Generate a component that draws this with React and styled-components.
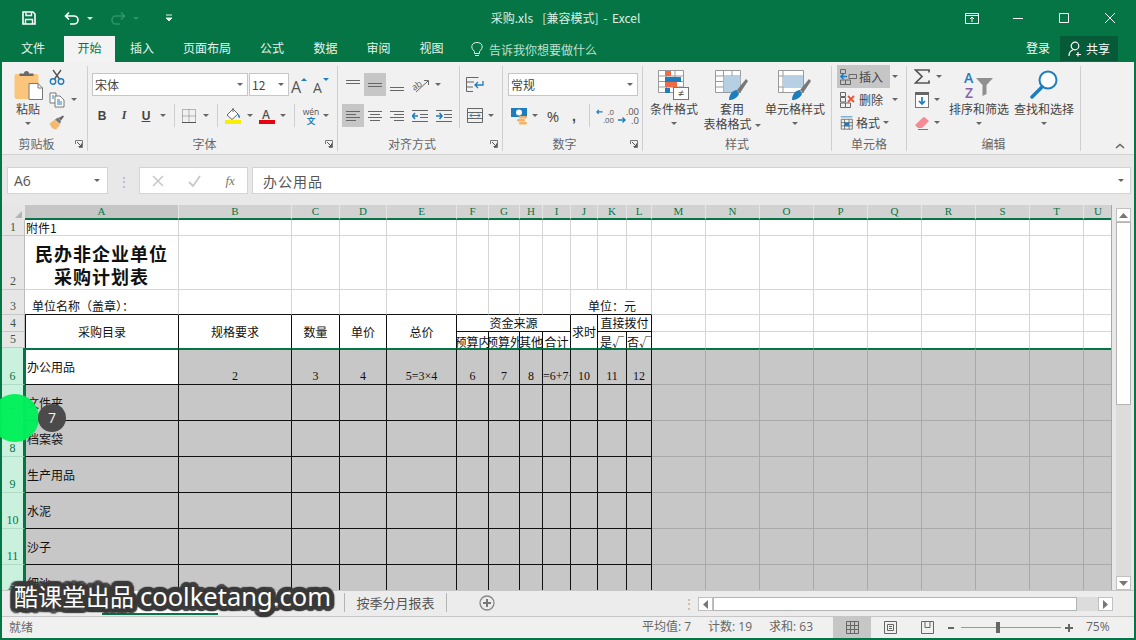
import React from 'react';
import styled, { createGlobalStyle } from 'styled-components';

const GREEN = '#067545';
const UI = '"Noto Sans CJK SC", "Noto Sans", sans-serif';
const SHEET = '"Noto Sans CJK SC", "Liberation Serif", serif';
const LATIN = '"Liberation Serif", serif';

const GlobalStyle = createGlobalStyle`
  html, body { margin: 0; padding: 0; width: 1136px; height: 640px; overflow: hidden; }
  * { box-sizing: border-box; }
  body { font-family: ${UI}; font-size: 12px; }
`;

const Window = styled.div`
  position: relative;
  width: 1136px;
  height: 640px;
  overflow: hidden;
  display: flex;
  flex-direction: column;
  background: ${GREEN};
  padding: 0 2px 2px;
`;

/* title bar */
const TitleBar = styled.div`
  height: 36px;
  display: grid;
  grid-template-columns: 1fr auto 1fr;
  align-items: center;
  color: #d9efe3;
`;
const Qat = styled.div`
  display: flex;
  align-items: center;
  padding-left: 17px;
`;
const Slot = styled.div`
  width: ${p => p.$w}px;
  height: ${p => p.$h || 23}px;
  flex: none;
  display: flex;
  align-items: center;
  justify-content: center;
`;
const WindowTitle = styled.div`
  font-size: 12px;
  line-height: 16px;
  white-space: pre;
  word-spacing: 2px;
  margin-right: 5px;
`;
const WinControls = styled.div`
  display: flex;
  align-items: center;
  justify-content: flex-end;
  padding-right: 1px;
`;
const WinBtn = styled.div`
  width: 46px;
  height: 20px;
  display: flex;
  align-items: center;
  justify-content: center;
`;

/* tabs */
const TabBar = styled.div`
  height: 26px;
  display: flex;
  align-items: stretch;
  color: #e6f4ec;
  line-height: 23px;
`;
const Tab = styled.div`
  width: ${p => p.$w}px;
  text-align: center;
  background: ${p => (p.$on ? '#f3f3f3' : 'transparent')};
  color: ${p => (p.$on ? GREEN : 'inherit')};
`;
const TellMe = styled.div`
  display: flex;
  align-items: center;
  gap: 6px;
  margin-left: 13px;
  color: #bfe0cf;
  flex: 1;
`;
const SignIn = styled.div`
  margin-right: 10px;
  color: #f4fbf7;
`;
const ShareBtn = styled.div`
  width: 58px;
  margin-right: 16px;
  height: 25px;
  background: #075a38;
  display: flex;
  align-items: center;
  justify-content: center;
  gap: 3px;
  color: #f4fbf7;
`;

/* ribbon */
const Ribbon = styled.div`
  height: 93px;
  display: flex;
  padding: 4px 0 3px;
  background: #f1f1f1;
  border-bottom: 1px solid #d2d2d2;
  color: #444;
`;
const Group = styled.div`
  width: ${p => p.$w}px;
  flex: none;
  display: flex;
  flex-direction: column;
  border-right: 1px solid #cfcfcf;
`;
const GroupBody = styled.div`
  height: 72px;
  display: flex;
  flex-direction: ${p => p.$dir || 'row'};
  padding-top: ${p => p.$top || 0}px;
  padding-left: ${p => p.$left || 0}px;
  gap: ${p => p.$gap || 0}px;
`;
const GroupFoot = styled.div`
  height: 14px;
  display: flex;
  align-items: center;
  line-height: 14px;
  color: #666;
`;
const GroupName = styled.div`
  flex: 1;
  text-align: center;
`;
const Launcher = styled.div`
  width: 16px;
  display: flex;
  align-items: center;
  justify-content: center;
`;
const ToolRow = styled.div`
  display: flex;
  align-items: center;
  height: 23px;
  margin-top: ${p => p.$mt || 0}px;
`;
const ToolCol = styled.div`
  display: flex;
  flex-direction: column;
  gap: ${p => p.$gap || 0}px;
  width: ${p => (p.$w ? `${p.$w}px` : 'auto')};
  border-right: ${p => (p.$line ? '1px solid #cfcfcf' : 'none')};
  height: ${p => (p.$line ? '62px' : 'auto')};
  padding-left: ${p => p.$left || 0}px;
  margin-top: ${p => p.$mt || 0}px;
`;
const Tool = styled.div`
  width: ${p => p.$w}px;
  height: 23px;
  flex: none;
  display: flex;
  align-items: center;
  justify-content: center;
  background: ${p => (p.$on ? '#c6c6c6' : 'transparent')};
`;
const Caret = styled.div`
  width: ${p => p.$w || 10}px;
  flex: none;
  display: flex;
  justify-content: center;
  &::after {
    content: '';
    border-left: 3px solid transparent;
    border-right: 3px solid transparent;
    border-top: 3px solid ${p => p.$color || '#666'};
  }
`;
const ToolSep = styled.div`
  width: ${p => p.$w}px;
  flex: none;
  height: 23px;
  display: flex;
  justify-content: center;
  &::after {
    content: '';
    width: 1px;
    background: #cfcfcf;
  }
`;
const ComboBox = styled.div`
  width: ${p => p.$w}px;
  height: 23px;
  flex: none;
  margin-left: ${p => p.$ml || 0}px;
  background: #fff;
  border: 1px solid #c6c6c6;
  display: flex;
  align-items: center;
  justify-content: space-between;
  padding: 0 3px 0 2px;
  color: #444;
`;
const BigButton = styled.div`
  width: ${p => p.$w}px;
  flex: none;
  display: flex;
  flex-direction: column;
  align-items: center;
  padding-top: 4px;
  white-space: nowrap;
  line-height: 15px;
`;
const BigIcon = styled.div`
  height: 30px;
  margin-bottom: 1px;
`;
const BigCaret = styled.div`
  height: 15px;
  display: flex;
  align-items: center;
`;
const InlineCaret = styled.span`
  display: inline-block;
  margin-left: 3px;
  vertical-align: middle;
  border-left: 3px solid transparent;
  border-right: 3px solid transparent;
  border-top: 3px solid #666;
`;
const CellBtn = styled.div`
  width: 53px;
  height: 23px;
  flex: none;
  display: flex;
  align-items: center;
  gap: 2px;
  padding-left: 3px;
  white-space: nowrap;
  background: ${p => (p.$on ? '#c6c6c6' : 'transparent')};
`;
const Collapse = styled.div`
  flex: 1;
  display: flex;
  align-items: flex-end;
  justify-content: flex-end;
  padding: 0 9px 2px 0;
`;
const Glyph = styled.span`
  font: ${p => p.$font};
  text-decoration: ${p => (p.$under ? 'underline' : 'none')};
  color: ${p => p.$color || '#444'};
`;

/* formula bar */
const FormulaBar = styled.div`
  height: 50px;
  display: flex;
  padding: 12px 3px 0 5px;
  background: #e8e8e8;
`;
const NameBox = styled.div`
  width: 101px;
  height: 27px;
  background: #fff;
  border: 1px solid #d4d4d4;
  display: flex;
  align-items: center;
  justify-content: space-between;
  padding: 0 6px;
  font: 14px "Open Sans", sans-serif;
  color: #555;
`;
const FxDots = styled.div`
  width: 31px;
  height: 27px;
  display: flex;
  align-items: center;
  justify-content: center;
  color: #aaa;
`;
const FxButtons = styled.div`
  width: 109px;
  height: 27px;
  margin-right: 4px;
  background: #fff;
  border: 1px solid #d4d4d4;
  display: flex;
  align-items: center;
  justify-content: space-around;
`;
const FxInput = styled.div`
  flex: 1;
  height: 27px;
  background: #fff;
  border: 1px solid #d4d4d4;
  display: flex;
  align-items: center;
  justify-content: space-between;
  padding: 0 5px 0 10px;
  font-size: 14px;
  letter-spacing: 1px;
  color: #555;
`;

/* sheet */
const SheetArea = styled.div`
  height: 385px;
  display: flex;
  background: #e8e8e8;
`;
const COLS = [154, 113, 48, 47, 70, 32, 31, 23, 28, 27, 29, 25, 54, 54, 54, 54, 54, 54, 54, 54, 29];
const ROWS = [16, 54, 25, 17, 16, 37, 36, 36, 36, 36, 36, 36];
const SheetGrid = styled.div`
  width: 1110px;
  height: 385px;
  display: grid;
  grid-template-columns: 23px ${COLS.map(c => `${c}px`).join(' ')};
  grid-template-rows: 15px ${ROWS.map(r => `${r}px`).join(' ')};
  overflow: hidden;
  border-right: 1px solid #a8a8a8;
  background: #fff;
`;
const Corner = styled.div`
  background: #e6e6e6;
  display: flex;
  align-items: flex-end;
  justify-content: flex-end;
  padding: 0 3px 2px 0;
`;
const ColHead = styled.div`
  background: ${p => (p.$on ? '#c6c6c6' : '#d2d2d2')};
  border-right: 1px solid #e4e4e4;
  border-bottom: 2px solid ${GREEN};
  color: ${GREEN};
  font: 11px/13px ${LATIN};
  text-align: center;
`;
const RowHead = styled.div`
  background: ${p => (p.$on ? '#c9f1de' : '#e6e6e6')};
  border-bottom: 1px solid ${p => (p.$on ? '#aedcc5' : '#c8c8c8')};
  border-right: ${p => (p.$on ? `2px solid ${GREEN}` : '1px solid #bdbdbd')};
  color: ${p => (p.$on ? GREEN : '#3c5a4c')};
  font: 12px/13px ${LATIN};
  display: flex;
  align-items: flex-end;
  justify-content: center;
  padding-bottom: 1px;
`;
const Cell = styled.div`
  grid-column: span ${p => p.$cs || 1};
  grid-row: span ${p => p.$rs || 1};
  min-width: 0;
  overflow: hidden;
  display: flex;
  white-space: nowrap;
  color: #111;
  font: 12px/14px ${SHEET};
  background: ${p => (p.$shade ? '#c7c7c7' : '#fff')};
  border-right: 1px solid ${p => p.$right};
  border-bottom: ${p => (p.$bottom ? `1px solid ${p.$bottom}` : 'none')};
  border-left: ${p => (p.$leftLine ? `1px solid ${p.$leftLine}` : 'none')};
  border-top: ${p => (p.$freeze ? `2px solid ${GREEN}` : 'none')};
  justify-content: ${p => (p.$h === 'left' ? 'flex-start' : 'center')};
  align-items: ${p => ({ top: 'flex-start', bottom: 'flex-end' }[p.$v] || 'center')};
  padding-left: ${p => p.$pad || 0}px;
  padding-top: ${p => (p.$v === 'top' ? 3 : 0)}px;
  padding-bottom: ${p => (p.$v === 'bottom' ? 1 : 0)}px;
`;
const Digits = styled.span`
  font: 12px/14px ${LATIN};
`;
const SheetTitle = styled.div`
  font: 700 18px/23px ${SHEET};
  letter-spacing: 1px;
  text-align: center;
  white-space: pre-line;
  padding-top: 4px;
`;
const VScroll = styled.div`
  width: 15px;
  margin-left: 4px;
  padding-top: 3px;
  display: flex;
  flex-direction: column;
  background: linear-gradient(#e8e8e8 3px, #dcdcdc 3px);
`;
const ScrollBtn = styled.div`
  width: ${p => p.$w || 15}px;
  height: ${p => p.$h || 14}px;
  flex: none;
  background: #fff;
  border: 1px solid #c0c0c0;
  display: flex;
  align-items: center;
  justify-content: center;
`;
const VThumb = styled.div`
  height: 183px;
  background: #fff;
  border: 1px solid #b4b4b4;
`;
const VTrack = styled.div`
  flex: 1;
`;

/* sheet tabs + status */
const SheetTabs = styled.div`
  height: 27px;
  display: flex;
  background: #ececec;
  border-top: 1px solid #c6c6c6;
  border-bottom: 1px solid #c6c6c6;
  color: #555;
`;
const TabStrip = styled.div`
  width: 678px;
  flex: none;
  display: flex;
  align-items: flex-start;
  padding-left: 100px;
`;
const SheetTab = styled.div`
  width: ${p => p.$w}px;
  height: ${p => (p.$on ? 24 : 19)}px;
  margin-top: ${p => (p.$on ? 0 : 2)}px;
  flex: none;
  text-align: center;
  font-size: 13px;
  line-height: 19px;
  background: ${p => (p.$on ? '#fff' : 'transparent')};
  border-bottom: ${p => (p.$on ? `2px solid ${GREEN}` : 'none')};
  border-right: ${p => (p.$line ? '1px solid #b4b4b4' : 'none')};
  color: ${p => (p.$on ? GREEN : '#555')};
`;
const AddSheet = styled.div`
  margin-left: 32px;
  height: 24px;
  display: flex;
  align-items: center;
`;
const HScroll = styled.div`
  flex: 1;
  display: flex;
  align-items: flex-start;
  padding-top: 6px;
`;
const HDots = styled.div`
  width: 18px;
  height: 14px;
  color: #aaa;
  line-height: 12px;
  text-align: center;
`;
const HThumb = styled.div`
  width: 364px;
  height: 14px;
  background: #fff;
  border: 1px solid #b4b4b4;
`;
const HTrack = styled.div`
  width: 21px;
  height: 14px;
  background: #dcdcdc;
`;
const StatusBar = styled.div`
  height: 21px;
  display: flex;
  align-items: stretch;
  background: #f0f0f0;
  color: #666;
  line-height: 20px;
  padding-left: 7px;
`;
const Ready = styled.div`
  width: 633px;
  flex: none;
`;
const StatItem = styled.div`
  flex: none;
  width: ${p => p.$w}px;
  font-family: "Open Sans", ${UI};
`;
const ViewBtn = styled.div`
  width: ${p => p.$w}px;
  flex: none;
  display: flex;
  align-items: center;
  justify-content: center;
  background: ${p => (p.$on ? '#c6c6c6' : 'transparent')};
`;
const ZoomSlider = styled.div`
  width: 100px;
  margin: 0 4px;
  flex: none;
  display: flex;
  align-items: center;
  justify-content: center;
  background: linear-gradient(#999, #999) center / 100% 1px no-repeat;
`;
const ZoomThumb = styled.div`
  width: 4px;
  height: 11px;
  background: #666;
  margin-right: 26px;
`;
const ZoomValue = styled.div`
  margin-left: 13px;
  font-family: "Open Sans", sans-serif;
`;

/* overlays from the screen recording */
const Halo = styled.div`
  position: absolute;
  left: -9px;
  top: 394px;
  width: 48px;
  height: 48px;
  border-radius: 50%;
  background: rgba(0, 240, 90, 0.97);
`;
const KeyBadge = styled.div`
  position: absolute;
  left: 38px;
  top: 404px;
  width: 28px;
  height: 28px;
  border-radius: 50%;
  background: #4b4b4b;
  color: #f2f2f2;
  font: 14px/28px "Open Sans", sans-serif;
  text-align: center;
`;
const ringShadow = Array.from({ length: 20 }, (_, i) => {
  const a = (i / 20) * Math.PI * 2;
  return `${(Math.cos(a) * 5).toFixed(1)}px ${(Math.sin(a) * 5).toFixed(1)}px 1px #3a3a3a`;
}).join(', ');
const Watermark = styled.div`
  position: absolute;
  left: 14px;
  top: 579px;
  display: flex;
  align-items: center;
  gap: 6px;
  color: #fff;
  line-height: 34px;
  white-space: nowrap;
  text-shadow: ${ringShadow};
`;
const MarkCn = styled.span`
  font: 24px/34px ${UI};
`;
const MarkEn = styled.span`
  font: 25.5px/34px "Noto Sans", sans-serif;
`;

/* icons */
const Svg = ({ w, h, children }) => (
  <svg width={w} height={h} viewBox={`0 0 ${w} ${h}`} fill="none">{children}</svg>
);
const Lines = ({ rows, color = '#666', w = 14, h = 14 }) => (
  <Svg w={w} h={h}>
    {rows.map(([a, b, y], i) => <path key={i} d={`M${a} ${y + 0.5}H${b}`} stroke={color} />)}
  </Svg>
);
const LauncherIcon = () => (
  <Svg w={8} h={8}>
    <path d="M0.5 4V0.5H7.5V7.5H4" stroke="#777" />
    <path d="M2 2L6.5 6.5M6.5 3.5V6.5H3.5" stroke="#555" />
  </Svg>
);
const PasteIcon = () => (
  <Svg w={30} h={30}>
    <g transform="translate(1.5 0)">
      <rect x="0" y="4" width="24" height="25" rx="2" fill="#fbc67c" />
      <path d="M5 6V3.5H9.5A2.5 2.5 0 0 1 14.5 3.5H19V6Z" fill="#6a6a6a" />
      <path d="M14.5 13.5H23.5L28 18V29.5H14.5Z" fill="#fff" stroke="#777" />
      <path d="M23.5 13.5V18H28" stroke="#777" />
    </g>
  </Svg>
);
const ScissorsIcon = () => (
  <Svg w={16} h={16}>
    <path d="M4 1L10.5 10M12 1L5.5 10" stroke="#555" strokeWidth="1.4" />
    <circle cx="4" cy="12.5" r="2.7" stroke="#1e7dbd" strokeWidth="1.4" />
    <circle cx="12" cy="12.5" r="2.7" stroke="#1e7dbd" strokeWidth="1.4" />
  </Svg>
);
const CopyIcon = () => (
  <Svg w={16} h={16}>
    <path d="M1 1H7V11H1Z" fill="#fff" stroke="#777" />
    <path d="M6 4H11L15 8V15H6Z" fill="#fff" stroke="#777" />
    <path d="M8 8H11M8 10H13M8 12H13M3 4H5M3 6H5" stroke="#1e7dbd" />
  </Svg>
);
const BrushIcon = () => (
  <Svg w={16} h={15}>
    <path d="M0.5 8.5L6 4.5L11 10L7 14.5C4 14.5 1.5 11.5 0.5 8.5Z" fill="#f6b96c" />
    <path d="M6 4.5L9 2.5L12 6L11 9Z" fill="#777" />
    <path d="M9.5 3L14 0.5L15 1.5L12 5.5Z" fill="#666" />
  </Svg>
);
const GrowIcon = ({ big }) => (
  <Svg w={20} h={20}>
    <text x="1" y="18" fontFamily="Open Sans, sans-serif" fontSize={big ? 16 : 14} fill="#555">A</text>
    <path d={big ? 'M11 6L14 3L17 6Z' : 'M11 3L17 3L14 6Z'} fill="#1e7dbd" />
  </Svg>
);
const BorderIcon = () => (
  <Svg w={14} h={14}>
    <path d="M0.5 0.5H13.5V13.5H0.5ZM7 0.5V13.5M0.5 7H13.5" stroke="#777" strokeDasharray="1 1" />
    <path d="M0 13.5H14" stroke="#555" />
  </Svg>
);
const FillIcon = () => (
  <Svg w={18} h={17}>
    <path d="M3 8L9 2L14 7L8 12.5Z" fill="#fff" stroke="#666" />
    <path d="M9 1V5" stroke="#666" />
    <path d="M14 7C16 8.5 16.5 10 15.5 11C14 10.5 14 9 14 7Z" fill="#1e7dbd" />
    <rect x="1" y="13" width="16" height="4" fill="#f8f000" />
  </Svg>
);
const FontColorIcon = () => (
  <Svg w={16} h={16}>
    <text x="3" y="11" fontFamily="Open Sans, sans-serif" fontWeight="600" fontSize="12" fill="#555">A</text>
    <rect x="0" y="12" width="16" height="4" fill="#e8000f" />
  </Svg>
);
const WenIcon = () => (
  <Svg w={18} h={18}>
    <text x="9" y="8" textAnchor="middle" fontFamily="Open Sans, sans-serif" fontSize="8.5" fill="#555">wén</text>
    <text x="9" y="17" textAnchor="middle" fontFamily="Noto Sans CJK SC, sans-serif" fontWeight="700" fontSize="8.5" fill="#1e7dbd">文</text>
  </Svg>
);
const OrientIcon = () => (
  <Svg w={18} h={16}>
    <text x="0" y="11" transform="rotate(-35 6 9)" fontFamily="Open Sans, sans-serif" fontSize="9" fill="#555">ab</text>
    <path d="M4 15L16 4M12 3.5H16.5V8" stroke="#666" />
  </Svg>
);
const IndentIcon = ({ flip }) => (
  <Svg w={16} h={12}>
    <path d="M0 0.5H16M8 4.5H16M8 7.5H16M0 11.5H16" stroke="#666" />
    <path d={flip ? 'M6 6H0M3 3L0.5 6L3 9' : 'M0 6H6M3.5 3L6 6L3.5 9'} stroke="#1e7dbd" strokeWidth="1.6" />
  </Svg>
);
const WrapIcon = () => (
  <Svg w={18} h={16}>
    <path d="M0.5 0.5H12.5M0.5 5H8M0.5 10H7M0.5 14.5H7M0.5 0.5V14.5" stroke="#666" />
    <path d="M17 4V8H9M12 5L9 8L12 11" stroke="#1e7dbd" strokeWidth="1.3" />
  </Svg>
);
const MergeIcon = () => (
  <Svg w={16} h={15}>
    <path d="M0.5 0.5H15.5V14.5H0.5ZM0.5 4.5H15.5M0.5 10.5H15.5" stroke="#666" />
    <path d="M3 7.5H13M5 5.5L3 7.5L5 9.5M11 5.5L13 7.5L11 9.5" stroke="#1e7dbd" />
  </Svg>
);
const CurrencyIcon = () => (
  <Svg w={18} h={18}>
    <rect x="0" y="1" width="16" height="9" fill="#1e7dbd" />
    <circle cx="8" cy="5.5" r="3" fill="#fff" />
    <rect x="8" y="9" width="8" height="2.5" rx="1" fill="#f4b266" />
    <rect x="6" y="12" width="8" height="2.5" rx="1" fill="#f4b266" />
    <rect x="8" y="15" width="8" height="2.5" rx="1" fill="#f4b266" />
  </Svg>
);
const DecimalIcon = ({ dec }) => (
  <Svg w={22} h={18}>
    <text x="22" y="8" textAnchor="end" fontFamily="Open Sans, sans-serif" fontSize="9.5" fill="#555">{dec ? '.00' : '.0'}</text>
    <text x="22" y="17" textAnchor="end" fontFamily="Open Sans, sans-serif" fontSize="9.5" fill="#555">{dec ? '.0' : '.00'}</text>
    <path d={dec ? 'M1 13H8M5.5 10.5L8 13L5.5 15.5' : 'M1 4H8M3.5 1.5L1 4L3.5 6.5'} stroke="#1e7dbd" strokeWidth="1.4" />
  </Svg>
);
const CondIcon = () => (
  <Svg w={32} h={30}>
    <path d="M0.5 0.5H25.5V22.5H0.5ZM0.5 6H25.5M0.5 11.5H25.5M0.5 17H25.5M8.5 0.5V22.5M17 0.5V22.5" stroke="#999" fill="#fff" />
    <rect x="7" y="1" width="6" height="5" fill="#ef6a45" />
    <rect x="7" y="7" width="16" height="5" fill="#1e7dbd" />
    <rect x="7" y="12" width="12" height="5" fill="#ef6a45" />
    <rect x="7" y="18" width="5" height="5" fill="#1e7dbd" />
    <rect x="15.5" y="17.5" width="15" height="12" fill="#fff" stroke="#777" />
    <text x="23" y="27" textAnchor="middle" fontFamily="Open Sans, sans-serif" fontSize="11" fill="#444">≠</text>
  </Svg>
);
const BrushOver = () => (
  <>
    <path d="M14 30C14 24 18 20 22 20L24 24C22 28 18 30 14 30Z" fill="#1e7dbd" />
    <path d="M22 20L31 9L33 11L25 23Z" fill="#777" />
  </>
);
const TableStyleIcon = () => (
  <Svg w={34} h={30}>
    <path d="M0.5 0.5H25.5V22.5H0.5ZM0.5 6H25.5M0.5 11.5H25.5M0.5 17H25.5M8.5 0.5V22.5M17 0.5V22.5" stroke="#999" fill="#fff" />
    <rect x="8.5" y="6" width="17" height="16" fill="#b7cfe3" />
    <BrushOver />
  </Svg>
);
const CellStyleIcon = () => (
  <Svg w={34} h={30}>
    <path d="M0.5 0.5H25.5V22.5H0.5ZM0.5 6H25.5M0.5 17H25.5M5 0.5V22.5" stroke="#999" fill="#fff" />
    <rect x="5" y="6" width="20" height="11" fill="#b7cfe3" />
    <BrushOver />
  </Svg>
);
const CellInsertIcon = () => (
  <Svg w={17} h={16}>
    <path d="M0.5 0.5H5.5V4.5H0.5ZM0.5 11H5.5V15.5H0.5ZM5.5 11H10.5V15.5H5.5ZM9 5.5H16.5V9.5H9Z" stroke="#666" />
    <path d="M7 7.5H1M3.5 5L1 7.5L3.5 10" stroke="#1e7dbd" strokeWidth="1.6" />
  </Svg>
);
const CellDeleteIcon = () => (
  <Svg w={17} h={16}>
    <path d="M0.5 0.5H5.5V4.5H0.5ZM0.5 5.5H5.5V10H0.5ZM0.5 11H5.5V15.5H0.5ZM5.5 11H10.5V15.5H5.5Z" stroke="#666" />
    <path d="M8 4L14 10M14 4L8 10" stroke="#e4573a" strokeWidth="1.8" />
  </Svg>
);
const CellFormatIcon = () => (
  <Svg w={17} h={16}>
    <path d="M1.5 3.5H15V15.5H1.5ZM1.5 7.5H15M1.5 11.5H15M5.5 3.5V15.5M11 3.5V15.5" stroke="#666" />
    <path d="M1 0.5H15" stroke="#1e7dbd" />
    <rect x="5.5" y="7.5" width="5.5" height="4.5" fill="#1e7dbd" />
  </Svg>
);
const SigmaIcon = () => (
  <Svg w={16} h={15}>
    <path d="M15 3.5V1H1.5L8 7.5L1.5 14H15V11.5" stroke="#555" strokeWidth="1.7" />
  </Svg>
);
const FillDownIcon = () => (
  <Svg w={14} h={16}>
    <rect x="0.5" y="0.5" width="13" height="15" fill="#fff" stroke="#777" />
    <rect x="0" y="0" width="14" height="3" fill="#666" />
    <path d="M7 5V12M4 9L7 12L10 9" stroke="#1e7dbd" strokeWidth="1.7" />
  </Svg>
);
const EraserIcon = () => (
  <Svg w={15} h={14}>
    <path d="M0 9L8 1.5Q9 0.5 10 1.5L14 5L7 12H3Z" fill="#f48a96" />
    <path d="M3 13.5H13" stroke="#777" />
  </Svg>
);
const SortIcon = () => (
  <Svg w={32} h={30}>
    <text x="1" y="13" fontFamily="Open Sans, sans-serif" fontWeight="600" fontSize="14" fill="#1e7dbd">A</text>
    <text x="2" y="28" fontFamily="Open Sans, sans-serif" fontWeight="600" fontSize="14" fill="#8463a8">Z</text>
    <path d="M13 8H30L23.5 15V24L19.5 26V15Z" fill="#8f8f8f" />
  </Svg>
);
const FindIcon = () => (
  <Svg w={28} h={30}>
    <circle cx="18" cy="10" r="8.5" stroke="#1e7dbd" strokeWidth="2" fill="#fff" />
    <path d="M12 17L2 27" stroke="#1e7dbd" strokeWidth="3.5" strokeLinecap="round" />
  </Svg>
);

const colNames = 'ABCDEFGHIJKLMNOPQRSTU'.split('');
const listItems = { 7: '文件夹', 8: '档案袋', 9: '生产用品', 10: '水泥', 11: '沙子', 12: '细沙' };
const sheetCells = {
  A1: { text: '附件1', h: 'left', pad: 1 },
  A2: { title: '民办非企业单位\n采购计划表' },
  A3: { text: '单位名称（盖章）：', h: 'left', pad: 7, v: 'bottom' },
  J3: { text: '单位：元', h: 'left', pad: 17, v: 'bottom', cs: 3 },
  A4: { text: '采购目录', rs: 2 },
  B4: { text: '规格要求', rs: 2 },
  C4: { text: '数量', rs: 2 },
  D4: { text: '单价', rs: 2 },
  E4: { text: '总价', rs: 2 },
  F4: { text: '资金来源', cs: 4 },
  J4: { text: '求时', rs: 2 },
  K4: { text: '直接拨付', cs: 2 },
  F5: { text: '预算内', v: 'top' },
  G5: { text: '预算外', v: 'top' },
  H5: { text: '其他', v: 'top' },
  I5: { text: '合计', v: 'top' },
  K5: { text: '是√', v: 'top' },
  L5: { text: '否√', v: 'top' },
  A6: { text: '办公用品', h: 'left', pad: 1 },
  B6: { digits: '2' },
  C6: { digits: '3' },
  D6: { digits: '4' },
  E6: { digits: '5=3×4' },
  F6: { digits: '6' },
  G6: { digits: '7' },
  H6: { digits: '8' },
  I6: { digits: '=6+7+8', h: 'left' },
  J6: { digits: '10' },
  K6: { digits: '11' },
  L6: { digits: '12' },
};
const covered = new Set(['G4', 'H4', 'I4', 'L4', 'K3', 'L3', 'A5', 'B5', 'C5', 'D5', 'E5', 'J5']);

const renderRow = r => {
  const out = [<RowHead key={`h${r}`} $on={r >= 6}>{r}</RowHead>];
  colNames.forEach((name, c) => {
    const id = `${name}${r}`;
    if (covered.has(id)) return;
    const info = sheetCells[id] || (c === 0 && listItems[r] ? { text: listItems[r], h: 'left', pad: 1 } : {});
    const inTable = c < 12 && r >= 4;
    const shade = r >= 6 && !(c === 0 && r === 6);
    const base = shade ? '#a9a9a9' : '#d6d6d6';
    const line = inTable ? '#111' : base;
    const endsAtFreeze = r === 5 || (r === 4 && info.rs === 2);
    let bottom = line;
    if (r === 3 && c < 12) bottom = '#111';
    if (endsAtFreeze) bottom = null;
    let leftLine = null;
    if (c === 0 && r >= 6) leftLine = GREEN;
    else if (c === 0 && r >= 4) leftLine = '#111';
    out.push(
      <Cell
        key={id}
        $cs={info.cs}
        $rs={info.rs}
        $h={info.h}
        $v={info.v || (info.digits ? 'bottom' : undefined)}
        $pad={info.pad}
        $shade={shade}
        $right={r === 3 && c >= 9 && c < 12 ? base : line}
        $bottom={bottom}
        $leftLine={leftLine}
        $freeze={r === 6}
      >
        {info.title ? <SheetTitle>{info.title}</SheetTitle> : null}
        {info.digits ? <Digits>{info.digits}</Digits> : info.text}
      </Cell>
    );
  });
  return out;
};

const tabs = [
  ['文件', 62], ['开始', 51, true], ['插入', 54], ['页面布局', 76],
  ['公式', 54], ['数据', 53], ['审阅', 53], ['视图', 53],
];

const Foot = ({ name, launcher }) => (
  <GroupFoot>
    <GroupName>{name}</GroupName>
    {launcher ? <Launcher><LauncherIcon /></Launcher> : null}
  </GroupFoot>
);

export default function App() {
  return (
    <Window>
      <GlobalStyle />
      <TitleBar>
        <Qat>
          <Slot $w={20}>
            <Svg w={14} h={14}>
              <path d="M1 1H11L13 3V13H1Z" stroke="#fff" strokeWidth="1.6" />
              <path d="M4 1.5V4.5H9.5V1.5M3.5 13V8.5H10.5V13" stroke="#fff" strokeWidth="1.4" />
            </Svg>
          </Slot>
          <Slot $w={23} />
          <Slot $w={20}>
            <Svg w={16} h={14}>
              <path d="M2 5H10A4 4 0 0 1 10 13H6M5 1.5L1.5 5L5 8.5" stroke="#fff" strokeWidth="1.6" />
            </Svg>
          </Slot>
          <Caret $w={16} $color="#d9efe3" />
          <Slot $w={10} />
          <Slot $w={20}>
            <Svg w={16} h={14}>
              <path d="M14 5H6A4 4 0 0 0 6 13H10M11 1.5L14.5 5L11 8.5" stroke="#2d9467" strokeWidth="1.6" />
            </Svg>
          </Slot>
          <Caret $w={16} $color="#2d9467" />
          <Slot $w={17} />
          <Slot $w={16}>
            <Svg w={8} h={8}>
              <path d="M1 1H7M1 4H7L4 7Z" stroke="#e6f4ec" fill="#e6f4ec" />
            </Svg>
          </Slot>
        </Qat>
        <WindowTitle>{'采购.xls  [兼容模式] - Excel'}</WindowTitle>
        <WinControls>
          <WinBtn>
            <Svg w={14} h={11}>
              <path d="M0.5 0.5H13.5V10.5H0.5ZM0.5 2.5H13.5M7 9V4.5M5 6L7 4L9 6" stroke="#fff" />
            </Svg>
          </WinBtn>
          <WinBtn><Svg w={10} h={10}><path d="M0 5.5H10" stroke="#fff" /></Svg></WinBtn>
          <WinBtn><Svg w={10} h={10}><path d="M0.5 0.5H9.5V9.5H0.5Z" stroke="#fff" /></Svg></WinBtn>
          <WinBtn><Svg w={10} h={10}><path d="M0 0L10 10M10 0L0 10" stroke="#fff" /></Svg></WinBtn>
        </WinControls>
      </TitleBar>

      <TabBar>
        {tabs.map(([name, w, on]) => <Tab key={name} $w={w} $on={on}>{name}</Tab>)}
        <TellMe>
          <Svg w={12} h={16}>
            <path d="M3.5 10.5C1 8 0.5 6.5 1 4.5C2 0.5 10 0.5 11 4.5C11.5 6.5 11 8 8.5 10.5V12.5H3.5ZM4 14.5H8" stroke="#e6f4ec" />
          </Svg>
          告诉我你想要做什么
        </TellMe>
        <SignIn>登录</SignIn>
        <ShareBtn>
          <Svg w={15} h={16}>
            <circle cx="7" cy="5" r="3.8" stroke="#fff" strokeWidth="1.2" />
            <path d="M1 15C1 11 3 9.5 5 9M10 11V15.5M8 13.5H13" stroke="#fff" strokeWidth="1.2" />
          </Svg>
          共享
        </ShareBtn>
      </TabBar>

      <Ribbon>
        <Group $w={86}>
          <GroupBody $left={10}>
            <BigButton $w={32}>
              <BigIcon><PasteIcon /></BigIcon>
              粘贴
              <BigCaret><Caret /></BigCaret>
            </BigButton>
            <ToolCol $mt={-1}>
              <ToolRow><Tool $w={26}><ScissorsIcon /></Tool></ToolRow>
              <ToolRow><Tool $w={26}><CopyIcon /></Tool><Caret $w={8} /></ToolRow>
              <ToolRow><Tool $w={26}><BrushIcon /></Tool></ToolRow>
            </ToolCol>
          </GroupBody>
          <Foot name="剪贴板" launcher />
        </Group>

        <Group $w={250}>
          <GroupBody $dir="column" $top={7} $left={3} $gap={8}>
            <ToolRow>
              <ComboBox $w={156} $ml={1}>宋体<Caret $w={8} /></ComboBox>
              <ComboBox $w={40} $ml={1}>12<Caret $w={8} /></ComboBox>
              <Tool $w={22}><GrowIcon big /></Tool>
              <Tool $w={22}><GrowIcon /></Tool>
            </ToolRow>
            <ToolRow>
              <Tool $w={22}><Glyph $font='700 12px "Liberation Sans"'>B</Glyph></Tool>
              <Tool $w={22}><Glyph $font='italic 700 12px "Liberation Serif"'>I</Glyph></Tool>
              <Tool $w={22}><Glyph $font='700 12px "Liberation Sans"' $under>U</Glyph></Tool>
              <Caret $w={12} />
              <ToolSep $w={10} />
              <Tool $w={20}><BorderIcon /></Tool>
              <Caret $w={14} />
              <ToolSep $w={8} />
              <Tool $w={24}><FillIcon /></Tool>
              <Caret $w={10} />
              <Tool $w={24}><FontColorIcon /></Tool>
              <Caret $w={8} />
              <ToolSep $w={14} />
              <Tool $w={20}><WenIcon /></Tool>
              <Caret $w={10} />
            </ToolRow>
          </GroupBody>
          <Foot name="字体" launcher />
        </Group>

        <Group $w={165}>
          <GroupBody>
            <ToolCol $w={122} $left={4} $line $gap={8}>
              <ToolRow $mt={7}>
                <Tool $w={22}><Lines rows={[[0, 14, 2], [0, 14, 5]]} /></Tool>
                <Tool $w={22} $on><Lines rows={[[0, 14, 5], [0, 14, 8]]} /></Tool>
                <Tool $w={22}><Lines rows={[[0, 14, 9], [0, 14, 12]]} /></Tool>
                <Tool $w={26}><OrientIcon /></Tool>
                <Caret $w={8} />
              </ToolRow>
              <ToolRow>
                <Tool $w={22} $on><Lines rows={[[0, 14, 2], [0, 10, 5], [0, 14, 8], [0, 10, 11]]} /></Tool>
                <Tool $w={22}><Lines rows={[[0, 14, 2], [2, 12, 5], [0, 14, 8], [2, 12, 11]]} /></Tool>
                <Tool $w={22}><Lines rows={[[0, 14, 2], [4, 14, 5], [0, 14, 8], [4, 14, 11]]} /></Tool>
                <Tool $w={24}><IndentIcon flip /></Tool>
                <Tool $w={24}><IndentIcon /></Tool>
              </ToolRow>
            </ToolCol>
            <ToolCol $gap={8} $mt={7}>
              <ToolRow><Tool $w={30}><WrapIcon /></Tool></ToolRow>
              <ToolRow><Tool $w={30}><MergeIcon /></Tool><Caret $w={2} /></ToolRow>
            </ToolCol>
          </GroupBody>
          <Foot name="对齐方式" launcher />
        </Group>

        <Group $w={140}>
          <GroupBody $dir="column" $top={7} $gap={8}>
            <ToolRow><ComboBox $w={130} $ml={5}>常规<Caret $w={8} /></ComboBox></ToolRow>
            <ToolRow>
              <Slot $w={7} />
              <Tool $w={20}><CurrencyIcon /></Tool>
              <Caret $w={10} />
              <Tool $w={26}><Glyph $font='15px "Open Sans"'>%</Glyph></Tool>
              <Tool $w={16}><Glyph $font='700 14px "Liberation Sans"'>,</Glyph></Tool>
              <ToolSep $w={14} />
              <Tool $w={18}><DecimalIcon /></Tool>
              <Tool $w={28}><DecimalIcon dec /></Tool>
            </ToolRow>
          </GroupBody>
          <Foot name="数字" launcher />
        </Group>

        <Group $w={189}>
          <GroupBody>
            <BigButton $w={62}>
              <BigIcon><CondIcon /></BigIcon>
              条件格式
              <BigCaret><Caret /></BigCaret>
            </BigButton>
            <BigButton $w={54}>
              <BigIcon><TableStyleIcon /></BigIcon>
              套用
              <span>表格格式<InlineCaret /></span>
            </BigButton>
            <BigButton $w={72}>
              <BigIcon><CellStyleIcon /></BigIcon>
              单元格样式
              <BigCaret><Caret /></BigCaret>
            </BigButton>
          </GroupBody>
          <Foot name="样式" />
        </Group>

        <Group $w={75}>
          <GroupBody $left={5}>
            <ToolCol $mt={-1}>
              <ToolRow><CellBtn $on><CellInsertIcon />插入</CellBtn><Caret $w={10} /></ToolRow>
              <ToolRow><CellBtn><CellDeleteIcon />删除</CellBtn><Caret $w={10} /></ToolRow>
              <ToolRow><CellBtn><CellFormatIcon />格式<Caret $w={8} /></CellBtn></ToolRow>
            </ToolCol>
          </GroupBody>
          <Foot name="单元格" />
        </Group>

        <Group $w={174}>
          <GroupBody>
            <ToolCol $w={39} $left={2} $mt={-1}>
              <ToolRow><Tool $w={26}><SigmaIcon /></Tool><Caret $w={8} /></ToolRow>
              <ToolRow><Tool $w={26}><FillDownIcon /></Tool><Caret $w={4} /></ToolRow>
              <ToolRow><Tool $w={26}><EraserIcon /></Tool><Caret $w={4} /></ToolRow>
            </ToolCol>
            <BigButton $w={66}>
              <BigIcon><SortIcon /></BigIcon>
              排序和筛选
              <BigCaret><Caret /></BigCaret>
            </BigButton>
            <BigButton $w={64}>
              <BigIcon><FindIcon /></BigIcon>
              查找和选择
              <BigCaret><Caret /></BigCaret>
            </BigButton>
          </GroupBody>
          <Foot name="编辑" />
        </Group>

        <Collapse>
          <Svg w={10} h={6}><path d="M1 5L5 1.5L9 5" stroke="#666" strokeWidth="1.6" /></Svg>
        </Collapse>
      </Ribbon>

      <FormulaBar>
        <NameBox>A6<Caret $w={8} /></NameBox>
        <FxDots>⋮</FxDots>
        <FxButtons>
          <Svg w={12} h={12}><path d="M1 1L11 11M11 1L1 11" stroke="#c8c8c8" strokeWidth="1.6" /></Svg>
          <Svg w={13} h={12}><path d="M1 7L5 11L12 1" stroke="#c8c8c8" strokeWidth="1.8" /></Svg>
          <Glyph $font='italic 13px "Liberation Serif"' $color="#777">fx</Glyph>
        </FxButtons>
        <FxInput>办公用品<Caret $w={8} /></FxInput>
      </FormulaBar>

      <SheetArea>
        <SheetGrid>
          <Corner><Svg w={7} h={7}><path d="M7 0V7H0Z" fill="#b4b4b4" /></Svg></Corner>
          {colNames.map((name, i) => <ColHead key={name} $on={i === 0}>{name}</ColHead>)}
          {ROWS.map((_, i) => renderRow(i + 1))}
        </SheetGrid>
        <VScroll>
          <ScrollBtn><Svg w={9} h={5}><path d="M0 5L4.5 0L9 5Z" fill="#777" /></Svg></ScrollBtn>
          <VThumb />
          <VTrack />
          <ScrollBtn><Svg w={9} h={5}><path d="M0 0L4.5 5L9 0Z" fill="#777" /></Svg></ScrollBtn>
        </VScroll>
      </SheetArea>

      <SheetTabs>
        <TabStrip>
          <SheetTab $w={116} $on>采购计划表</SheetTab>
          <SheetTab $w={127} $line>采购计划报表</SheetTab>
          <SheetTab $w={102} $line>按季分月报表</SheetTab>
          <AddSheet>
            <Svg w={16} h={16}>
              <circle cx="8" cy="8" r="7" stroke="#888" strokeWidth="1.3" />
              <path d="M4 8H12M8 4V12" stroke="#777" strokeWidth="2" />
            </Svg>
          </AddSheet>
        </TabStrip>
        <HScroll>
          <HDots>⋮</HDots>
          <ScrollBtn><Svg w={5} h={9}><path d="M5 0L0 4.5L5 9Z" fill="#777" /></Svg></ScrollBtn>
          <HThumb />
          <HTrack />
          <ScrollBtn><Svg w={5} h={9}><path d="M0 0L5 4.5L0 9Z" fill="#777" /></Svg></ScrollBtn>
        </HScroll>
      </SheetTabs>

      <StatusBar>
        <Ready>就绪</Ready>
        <StatItem $w={66}>平均值: 7</StatItem>
        <StatItem $w={61}>计数: 19</StatItem>
        <StatItem $w={64}>求和: 63</StatItem>
        <ViewBtn $w={38} $on>
          <Svg w={13} h={13}><path d="M0.5 0.5H12.5V12.5H0.5ZM4.5 0.5V12.5M8.5 0.5V12.5M0.5 4.5H12.5M0.5 8.5H12.5" stroke="#666" /></Svg>
        </ViewBtn>
        <ViewBtn $w={38}>
          <Svg w={13} h={13}><path d="M0.5 0.5H12.5V12.5H0.5ZM3.5 3.5H9.5V9.5H3.5ZM5 5.5H8M5 7.5H8" stroke="#666" /></Svg>
        </ViewBtn>
        <ViewBtn $w={36}>
          <Svg w={13} h={13}><path d="M0.5 0.5H12.5V12.5H0.5ZM4 0.5V6.5H9V0.5" stroke="#666" /></Svg>
        </ViewBtn>
        <ViewBtn $w={12}>
          <Svg w={6} h={6}><path d="M0 3H6" stroke="#666" strokeWidth="2" /></Svg>
        </ViewBtn>
        <ZoomSlider><ZoomThumb /></ZoomSlider>
        <ViewBtn $w={8}>
          <Svg w={8} h={8}><path d="M0 4H8M4 0V8" stroke="#666" strokeWidth="2" /></Svg>
        </ViewBtn>
        <ZoomValue>75%</ZoomValue>
      </StatusBar>

      <Halo />
      <KeyBadge>7</KeyBadge>
      <Watermark>
        <MarkCn>酷课堂出品</MarkCn>
        <MarkEn>coolketang.com</MarkEn>
      </Watermark>
    </Window>
  );
}
